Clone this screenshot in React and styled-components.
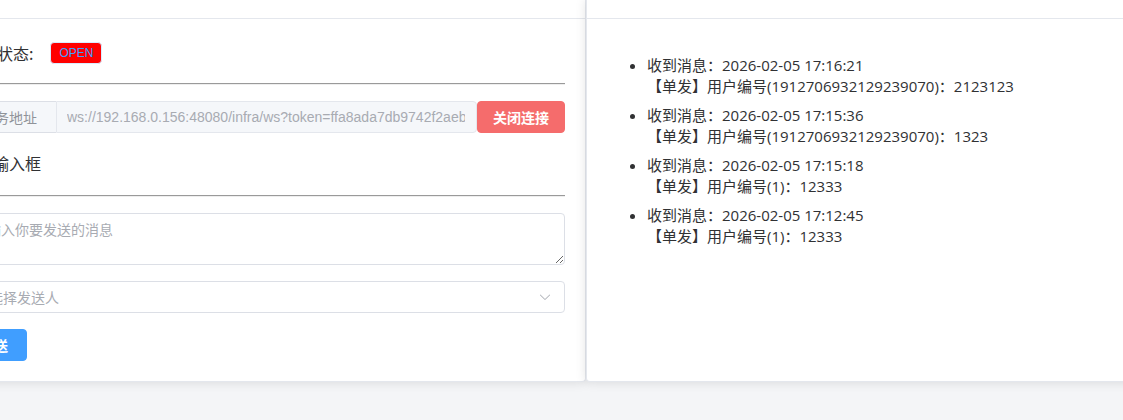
import React from "react";
import styled, { createGlobalStyle } from "styled-components";

const GlobalStyle = createGlobalStyle`
  html, body {
    margin: 0;
    padding: 0;
    background: #f4f5f7;
  }
  body {
    font-family: "Liberation Sans", "Noto Sans CJK SC", sans-serif;
    font-size: 14px;
    color: #303133;
  }
`;

const messages = [
  { time: "2026-02-05 17:16:21", user: "1912706932129239070", text: "2123123" },
  { time: "2026-02-05 17:15:36", user: "1912706932129239070", text: "1323" },
  { time: "2026-02-05 17:15:18", user: "1", text: "12333" },
  { time: "2026-02-05 17:12:45", user: "1", text: "12333" },
];

const App = () => {
  return (
    <>
      <GlobalStyle />
      <Viewport>
        <Row>
          <Card $width={646}>
            <CardHeader />
            <CardBody>
              <StatusRow>
                <Label>连接状态:</Label>
                <Tag>OPEN</Tag>
              </StatusRow>
              <Divider />
              <InputGroup>
                <Prepend>服务地址</Prepend>
                <AddressInput
                  disabled
                  value="ws://192.168.0.156:48080/infra/ws?token=ffa8ada7db9742f2aeb0c3d1e58a7b20"
                  readOnly
                />
                <Button $color="#f56c6c" $width={88}>
                  关闭连接
                </Button>
              </InputGroup>
              <Heading>消息输入框</Heading>
              <Divider />
              <TextArea placeholder="请输入你要发送的消息" />
              <Select>
                <span>请选择发送人</span>
                <svg width="14" height="14" viewBox="0 0 1024 1024">
                  <path
                    fill="#a8abb2"
                    d="M831.872 340.864 512 652.672 192.128 340.864a30.592 30.592 0 0 0-42.752 0 29.12 29.12 0 0 0 0 41.6L489.664 714.24a32 32 0 0 0 44.672 0l340.288-331.712a29.12 29.12 0 0 0 0-41.728 30.592 30.592 0 0 0-42.752 0z"
                  />
                </svg>
              </Select>
              <ButtonRow>
                <Button $color="#409eff" $width={66}>
                  发送
                </Button>
              </ButtonRow>
            </CardBody>
          </Card>
          <Card $width={640}>
            <CardHeader />
            <CardBody>
              <MessageList>
                {messages.map((m, i) => (
                  <li key={i}>
                    <div>收到消息：{m.time}</div>
                    <div>
                      【单发】用户编号({m.user})：{m.text}
                    </div>
                  </li>
                ))}
              </MessageList>
            </CardBody>
          </Card>
        </Row>
      </Viewport>
    </>
  );
};

export default App;

const Viewport = styled.div`
  width: 1123px;
  height: 420px;
  overflow: hidden;
  background: #f4f5f7;
`;

const Row = styled.div`
  display: flex;
  margin-left: -60px;
`;

const Card = styled.div`
  flex: 0 0 ${(p) => p.$width}px;
  box-sizing: border-box;
  background: #ffffff;
  border: 1px solid #e4e7ed;
  border-top: none;
  border-radius: 0 0 4px 4px;
  box-shadow: 0 0 12px rgba(0, 0, 0, 0.12);
`;

const CardHeader = styled.div`
  height: 18px;
  border-bottom: 1px solid #e4e7ed;
`;

const CardBody = styled.div`
  padding: 20px;
  display: flex;
  flex-direction: column;
  gap: 16px;
`;

const StatusRow = styled.div`
  display: flex;
  align-items: center;
  height: 28px;
  padding-left: 4px;
  gap: 17px;
`;

const Label = styled.span`
  font-size: 16px;
  font-family: "Noto Sans CJK SC", sans-serif;
  color: #303133;
`;

const Tag = styled.span`
  display: inline-flex;
  align-items: center;
  justify-content: center;
  box-sizing: border-box;
  height: 22px;
  padding: 0 8px;
  background: #ff0000;
  border: 1px solid #d9ecff;
  border-radius: 4px;
  color: #409eff;
  font-size: 12px;
`;

const Divider = styled.hr`
  margin: 0;
  border: none;
  border-top: 1px solid #9a9a9a;
  border-bottom: 1px solid #eeeeee;
`;

const InputGroup = styled.div`
  display: flex;
  height: 32px;
`;

const Prepend = styled.div`
  display: flex;
  align-items: center;
  box-sizing: border-box;
  padding: 0 19px;
  background: #f5f7fa;
  border: 1px solid #dcdfe6;
  border-right: none;
  border-radius: 4px 0 0 4px;
  color: #909399;
  font-family: "Noto Sans CJK SC", sans-serif;
  white-space: nowrap;
`;

const AddressInput = styled.input`
  flex: 1;
  min-width: 0;
  box-sizing: border-box;
  height: 32px;
  padding: 0 11px 0 10px;
  background: #f5f7fa;
  border: 1px solid #e4e7ed;
  border-radius: 0 4px 4px 0;
  color: #a8abb2;
  font-family: "Liberation Sans", "Noto Sans CJK SC", sans-serif;
  font-size: 14px;
  outline: none;
`;

const Button = styled.button`
  box-sizing: border-box;
  width: ${(p) => p.$width}px;
  height: 32px;
  padding: 0;
  border: 1px solid ${(p) => p.$color};
  border-radius: 4px;
  background: ${(p) => p.$color};
  color: #ffffff;
  font-family: "Noto Sans CJK SC", sans-serif;
  font-size: 14px;
  font-weight: 600;
  cursor: pointer;
`;

const Heading = styled.div`
  height: 30px;
  line-height: 28px;
  font-size: 16px;
  font-family: "Noto Sans CJK SC", sans-serif;
  color: #303133;
`;

const TextArea = styled.textarea`
  box-sizing: border-box;
  height: 52px;
  padding: 5px 11px;
  border: 1px solid #dcdfe6;
  border-radius: 4px;
  font-family: "Noto Sans CJK SC", sans-serif;
  font-size: 14px;
  line-height: 21px;
  color: #606266;
  outline: none;
  &::placeholder {
    color: #a8abb2;
  }
`;

const Select = styled.div`
  display: flex;
  align-items: center;
  justify-content: space-between;
  box-sizing: border-box;
  height: 32px;
  padding: 0 12px 0 13px;
  border: 1px solid #dcdfe6;
  border-radius: 4px;
  color: #a8abb2;
  font-family: "Noto Sans CJK SC", sans-serif;
`;

const ButtonRow = styled.div`
  display: flex;
`;

const MessageList = styled.ul`
  margin: 16px 0;
  padding-left: 40px;
  font-family: "Open Sans", "Noto Sans CJK SC", sans-serif;
  font-size: 15px;
  line-height: 21px;
  color: #303133;
  li {
    margin-bottom: 8px;
  }
`;
